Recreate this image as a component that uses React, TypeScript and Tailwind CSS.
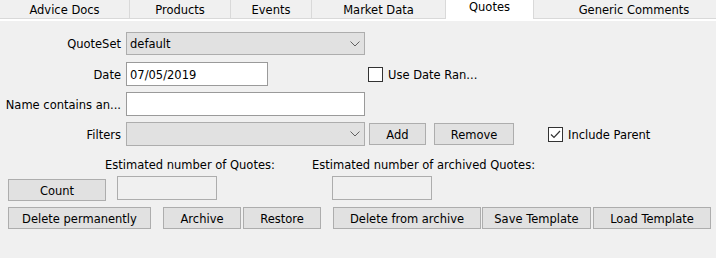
import React from "react";

const Chevron = () => (
  <svg width="10" height="6" viewBox="0 0 10 6" className="block">
    <path d="M0.5 0.5 L5 5 L9.5 0.5" fill="none" stroke="#606060" strokeWidth="1" />
  </svg>
);

const Tab = ({ label, w, selected }: { label: string; w: string; selected?: boolean }) => (
  <div
    className={
      selected
        ? `${w} shrink-0 h-[19px] bg-white border-r border-[#d9d9d9] flex items-center justify-center pb-[3px]`
        : `${w} shrink-0 h-[19px] bg-[#f0f0f0] border-r border-b border-[#d9d9d9] flex items-center justify-center pt-[3px]`
    }
  >
    {label}
  </div>
);

const Btn = ({ label, cls }: { label: string; cls: string }) => (
  <div className={`${cls} h-[22px] bg-[#e1e1e1] border border-[#adadad] flex items-center justify-center pt-[3px]`}>
    {label}
  </div>
);

const Label = ({ text }: { text: string }) => (
  <div className="w-[126px] pr-[5px] text-right whitespace-nowrap pt-[3px]">{text}</div>
);

export default function App() {
  return (
    <div className="w-[716px] h-[258px] bg-[#f0f0f0] text-black font-['DejaVu_Sans',sans-serif] text-[11.5px] leading-none overflow-hidden">
      <div className="flex">
        <Tab label="Advice Docs" w="w-[130px]" />
        <Tab label="Products" w="w-[101px]" />
        <Tab label="Events" w="w-[81px]" />
        <Tab label="Market Data" w="w-[134px]" />
        <Tab label="Quotes" w="w-[88px]" selected />
        <div className="w-[200px] shrink-0 h-[19px] bg-[#f0f0f0] border-b border-[#d9d9d9] flex items-center justify-center pt-[3px]">
          Generic Comments
        </div>
      </div>
      <div className="h-[2px] bg-white" />

      <div className="flex flex-col">
        {/* QuoteSet */}
        <div className="flex items-center mt-[11px] h-[23px]">
          <Label text="QuoteSet" />
          <div className="w-[239px] h-[23px] bg-[#e1e1e1] border border-[#adadad] flex items-center justify-between pl-[3px] pr-[4px]">
            <span className="pt-[3px]">default</span>
            <Chevron />
          </div>
        </div>

        {/* Date */}
        <div className="flex items-center mt-[7px] h-[24px]">
          <Label text="Date" />
          <div className="w-[142px] h-[24px] bg-white border border-[#9a9a9a] flex items-center pl-[3px] pt-[3px]">
            07/05/2019
          </div>
          <div className="ml-[100px] w-[15px] h-[15px] bg-white border border-[#333333]" />
          <span className="ml-[5px] pt-[3px]">Use Date Ran...</span>
        </div>

        {/* Name */}
        <div className="flex items-center mt-[6px] h-[24px]">
          <Label text="Name contains an..." />
          <div className="w-[239px] h-[24px] bg-white border border-[#9a9a9a]" />
        </div>

        {/* Filters */}
        <div className="flex items-start mt-[6px] h-[24px]">
          <div className="h-[24px] flex items-center">
            <Label text="Filters" />
          </div>
          <div className="w-[239px] h-[24px] bg-[#e1e1e1] border border-[#adadad] flex items-center justify-end pr-[4px]">
            <Chevron />
          </div>
          <Btn label="Add" cls="ml-[4px] mt-[1px] w-[57px]" />
          <Btn label="Remove" cls="ml-[8px] mt-[1px] w-[80px]" />
          <div className="ml-[34px] mt-[5px] w-[15px] h-[15px] bg-white border border-[#333333] flex items-center justify-center">
            <svg width="11" height="9" viewBox="0 0 11 9" className="block">
              <path d="M1 4.5 L4 7.5 L10 1" fill="none" stroke="#333333" strokeWidth="1.2" />
            </svg>
          </div>
          <div className="ml-[5px] h-[24px] flex items-center pt-[3px]">Include Parent</div>
        </div>

        {/* Estimated labels */}
        <div className="flex items-center mt-[11px] h-[14px] pt-[3px]">
          <span className="ml-[105px] w-[207px] whitespace-nowrap">Estimated number of Quotes:</span>
          <span className="whitespace-nowrap">Estimated number of archived Quotes:</span>
        </div>

        {/* Count row */}
        <div className="flex items-start mt-[5px] h-[24px]">
          <Btn label="Count" cls="ml-[8px] mt-[3px] w-[98px]" />
          <div className="ml-[11px] w-[100px] h-[24px] bg-[#f0f0f0] border border-[#adadad]" />
          <div className="ml-[115px] w-[100px] h-[24px] bg-[#f0f0f0] border border-[#adadad]" />
        </div>

        {/* Buttons row */}
        <div className="flex items-start mt-[7px] h-[22px]">
          <Btn label="Delete permanently" cls="ml-[8px] w-[143px]" />
          <Btn label="Archive" cls="ml-[12px] w-[78px]" />
          <Btn label="Restore" cls="ml-[2px] w-[78px]" />
          <Btn label="Delete from archive" cls="ml-[12px] w-[148px]" />
          <Btn label="Save Template" cls="ml-[1px] w-[109px]" />
          <Btn label="Load Template" cls="ml-[2px] w-[118px]" />
        </div>
      </div>
    </div>
  );
}
